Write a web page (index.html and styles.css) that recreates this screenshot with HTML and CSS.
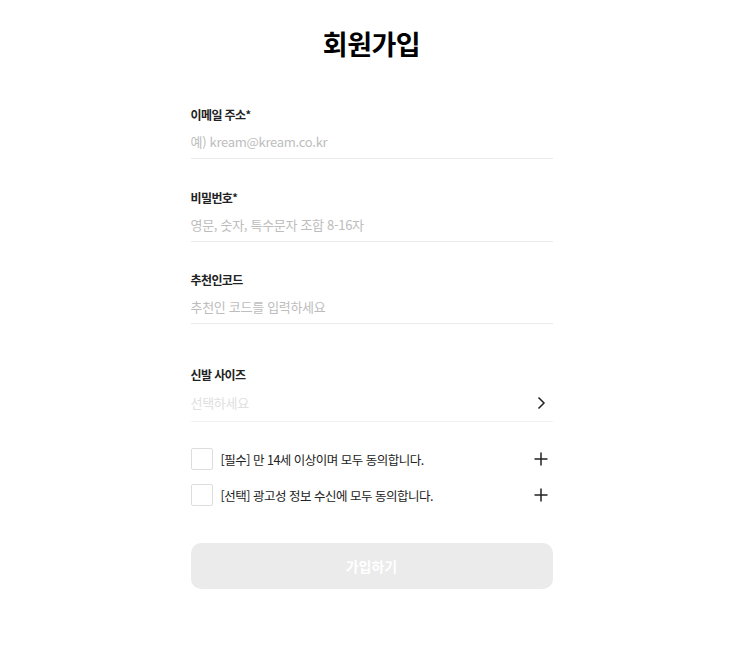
FILE: index.html
```html
<!DOCTYPE html>
<html lang="ko">
  <head>
    <meta charset="utf-8" />
    <title>회원가입</title>
    <link rel="stylesheet" href="styles.css">
  </head>
  <body>
    <div class="join">
      <h1 class="join-title">회원가입</h1>

      <div class="field">
        <h3 class="field-label">이메일 주소<span class="req">*</span></h3>
        <input type="text" class="field-input" placeholder="예) kream@kream.co.kr" />
      </div>
      <div class="field">
        <h3 class="field-label">비밀번호<span class="req">*</span></h3>
        <input type="password" class="field-input" placeholder="영문, 숫자, 특수문자 조합 8-16자" />
      </div>
      <div class="field">
        <h3 class="field-label">추천인코드</h3>
        <input type="text" class="field-input" placeholder="추천인 코드를 입력하세요" />
      </div>

      <div class="field field-size">
        <h3 class="field-label">신발 사이즈</h3>
        <div class="size-select">
          <span class="size-placeholder">선택하세요</span>
          <svg class="ico" width="14" height="14" viewBox="0 0 14 14">
            <path d="M4.5 1.5 L10 7 L4.5 12.5" fill="none" stroke="#222" stroke-width="1.5" />
          </svg>
        </div>
      </div>

      <div class="terms">
        <label class="term">
          <span class="check"></span>
          <span class="term-text">[필수] 만 14세 이상이며 모두 동의합니다.</span>
          <svg class="ico" width="14" height="14" viewBox="0 0 14 14">
            <path d="M7 0.5 V13.5 M0.5 7 H13.5" fill="none" stroke="#222" stroke-width="1.5" />
          </svg>
        </label>
        <label class="term">
          <span class="check"></span>
          <span class="term-text">[선택] 광고성 정보 수신에 모두 동의합니다.</span>
          <svg class="ico" width="14" height="14" viewBox="0 0 14 14">
            <path d="M7 0.5 V13.5 M0.5 7 H13.5" fill="none" stroke="#222" stroke-width="1.5" />
          </svg>
        </label>
      </div>

      <button class="btn-join" disabled>가입하기</button>
    </div>
  </body>
</html>
```

FILE: styles.css
```css
body {
  margin: 0;
  background-color: #ffffff;
  font-family: "Noto Sans CJK KR", "Noto Sans", sans-serif;
  color: #222222;
}

.join {
  width: 362px;
  margin: 0 auto;
  padding-top: 26px;
}

.join-title {
  margin: 0 0 14px;
  font-size: 27px;
  line-height: 36px;
  font-weight: 700;
  text-align: center;
  letter-spacing: -0.5px;
  color: #000000;
}

.field {
  padding-top: 29px;
}

.field-label {
  margin: 0;
  font-size: 12px;
  line-height: 18px;
  font-weight: 700;
  letter-spacing: -0.6px;
}

.req {
  font-size: 11px;
  vertical-align: 1px;
}

.field-input {
  display: block;
  width: 100%;
  height: 35px;
  padding: 0;
  border: none;
  border-bottom: 1px solid #ebebeb;
  box-sizing: border-box;
  outline: none;
  font-family: inherit;
  font-size: 13px;
  letter-spacing: -0.3px;
  color: #222222;
}

.field-input::placeholder {
  color: #bdbdbd;
}

.field-size {
  padding-top: 42px;
}

.size-select {
  display: flex;
  align-items: center;
  justify-content: space-between;
  height: 38px;
  padding-right: 5px;
  border-bottom: 1px solid #f0f0f0;
  box-sizing: border-box;
}

.size-placeholder {
  font-size: 13px;
  letter-spacing: -0.3px;
  color: #e0e0e0;
}

.terms {
  display: flex;
  flex-direction: column;
  margin-top: 19px;
}

.term {
  display: flex;
  align-items: center;
  height: 36px;
  padding-right: 5px;
}

.check {
  width: 20px;
  height: 20px;
  border: 1px solid #dddddd;
  border-radius: 2px;
  margin-right: 8px;
  flex-shrink: 0;
}

.term-text {
  flex: 1;
  font-size: 12.5px;
  color: #222222;
  letter-spacing: -0.5px;
}

.btn-join {
  display: block;
  width: 100%;
  height: 46px;
  margin-top: 30px;
  border: none;
  border-radius: 10px;
  background-color: #ebebeb;
  color: #ffffff;
  font-family: inherit;
  font-size: 14px;
  font-weight: 700;
}
```
